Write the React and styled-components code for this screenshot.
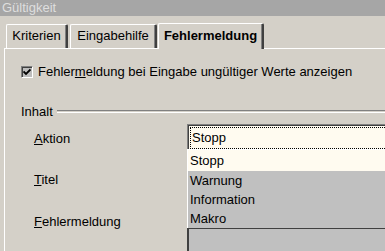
import React from "react"
import styled, { createGlobalStyle } from "styled-components"

const Global = createGlobalStyle`
    html, body {
        margin: 0;
        padding: 0;
        background: #d4d0c8;
        overflow: hidden;
    }
    body {
        font-family: "Liberation Sans", Arial, sans-serif;
        font-size: 13px;
        color: #000;
    }
`;

const Window = styled.div`
    width: 385px;
    height: 251px;
    overflow: hidden;
    background: #d4d0c8;
`;
const TitleBar = styled.div`
    height: 16px;
    line-height: 16px;
    padding-left: 2px;
    background: #a6a6a6;
    color: #dedede;
`;
const TabStrip = styled.div`
    display: flex;
    align-items: flex-end;
    height: 25px;
    margin-top: 7px;
    padding-left: 6px;
    position: relative;
    z-index: 1;
`;
const Tab = styled.div`
    box-sizing: border-box;
    width: ${p => p.$w}px;
    height: ${p => p.$active ? 26 : 24}px;
    line-height: ${p => p.$active ? 23 : 22}px;
    text-align: center;
    margin-left: ${p => p.$active ? -1 : 0}px;
    margin-right: ${p => p.$active ? 0 : 2}px;
    margin-bottom: ${p => p.$active ? -1 : 0}px;
    border-top: 1px solid #fff;
    border-left: 1px solid #fff;
    border-right: 2px solid #404040;
    border-top-left-radius: 2px;
    border-top-right-radius: 2px;
    background: #d4d0c8;
    font-weight: ${p => p.$active ? "bold" : "normal"};
    box-shadow: inset -1px 0 0 #808080;
    white-space: nowrap;
`;
const Panel = styled.div`
    margin-left: 4px;
    border-top: 1px solid #fff;
    border-left: 1px solid #fff;
    height: 220px;
    padding-top: 16px;
`;
const CheckRow = styled.label`
    display: flex;
    align-items: center;
    gap: 5px;
    padding-left: 16px;
    height: 13px;
`;
const CheckBox = styled.span`
    box-sizing: border-box;
    width: 12px;
    height: 12px;
    border-top: 1px solid #808080;
    border-left: 1px solid #808080;
    border-right: 1px solid #fff;
    border-bottom: 1px solid #fff;
    box-shadow: inset 1px 1px 0 #404040;
    background: #bdbdbd;
    display: flex;
    align-items: center;
    justify-content: center;
`;
const GroupHead = styled.div`
    display: flex;
    align-items: center;
    gap: 4px;
    margin-top: 26px;
    padding-left: 16px;
    height: 15px;
    &::after {
        content: "";
        flex: 1;
        height: 1px;
        border-top: 1px solid #808080;
        border-bottom: 1px solid #fff;
        margin-top: -1px;
    }
`;
const Row = styled.div`
    display: flex;
    align-items: flex-start;
    padding-left: 29px;
    margin-top: ${p => p.$gap}px;
`;
const Label = styled.div`
    width: 153px;
    flex: none;
    line-height: 25px;
    padding-top: ${p => p.$pad || 0}px;
`;
const Field = styled.div`
    position: relative;
    width: 260px;
    flex: none;
`;
const Combo = styled.div`
    box-sizing: border-box;
    height: 25px;
    border-top: 1px solid #808080;
    border-left: 1px solid #808080;
    box-shadow: inset 1px 1px 0 #404040;
    background: #fffbf0;
    padding: 2px 0 2px 2px;
`;
const Focus = styled.div`
    height: 20px;
    line-height: 20px;
    border: 1px dotted #000;
    border-right: none;
    padding-left: 1px;
`;
const List = styled.div`
    position: absolute;
    left: 0;
    top: 25px;
    width: 100%;
    border-left: 1px solid #fff;
    background: #c0c0c0;
    z-index: 2;
`;
const Item = styled.div`
    height: 19px;
    line-height: 19px;
    padding-left: 2px;
    background: ${p => p.$selected ? "#fffbf0" : "#c0c0c0"};
    &:first-child {
        height: 21px;
        line-height: 22px;
        border-top: 1px solid #fff;
    }
`;
const Input = styled.div`
    box-sizing: border-box;
    height: ${p => p.$h}px;
    margin-top: ${p => p.$top || 0}px;
    border-top: 2px solid #404040;
    border-left: 2px solid #404040;
    background: #c0c0c0;
`;

const options = ["Stopp", "Warnung", "Information", "Makro"];

function App() {
    return (
        <Window>
            <Global />
            <TitleBar>Gültigkeit</TitleBar>
            <TabStrip>
                <Tab $w={62}>Kriterien</Tab>
                <Tab $w={87}>Eingabehilfe</Tab>
                <Tab $w={106} $active>Fehlermeldung</Tab>
            </TabStrip>
            <Panel>
                <CheckRow>
                    <CheckBox>
                        <svg width="8" height="8" viewBox="0 0 8 8">
                            <path d="M0.5 3.5 L3 6 L7.5 1.5" stroke="#000" strokeWidth="1.8" fill="none" />
                        </svg>
                    </CheckBox>
                    <span>Fehler<u>m</u>eldung bei Eingabe ungültiger Werte anzeigen</span>
                </CheckRow>
                <GroupHead>Inhalt</GroupHead>
                <Row $gap={5}>
                    <Label $pad={2}><u>A</u>ktion</Label>
                    <Field>
                        <Combo><Focus>Stopp</Focus></Combo>
                        <List>
                            {options.map((o, i) => (
                                <Item key={o} $selected={i === 0}>{o}</Item>
                            ))}
                        </List>
                    </Field>
                </Row>
                <Row $gap={16}>
                    <Label><u>T</u>itel</Label>
                    <Field><Input $h={25} /></Field>
                </Row>
                <Row $gap={17}>
                    <Label><u>F</u>ehlermeldung</Label>
                    <Field><Input $h={60} $top={18} /></Field>
                </Row>
            </Panel>
        </Window>
    );
}

export default App;
